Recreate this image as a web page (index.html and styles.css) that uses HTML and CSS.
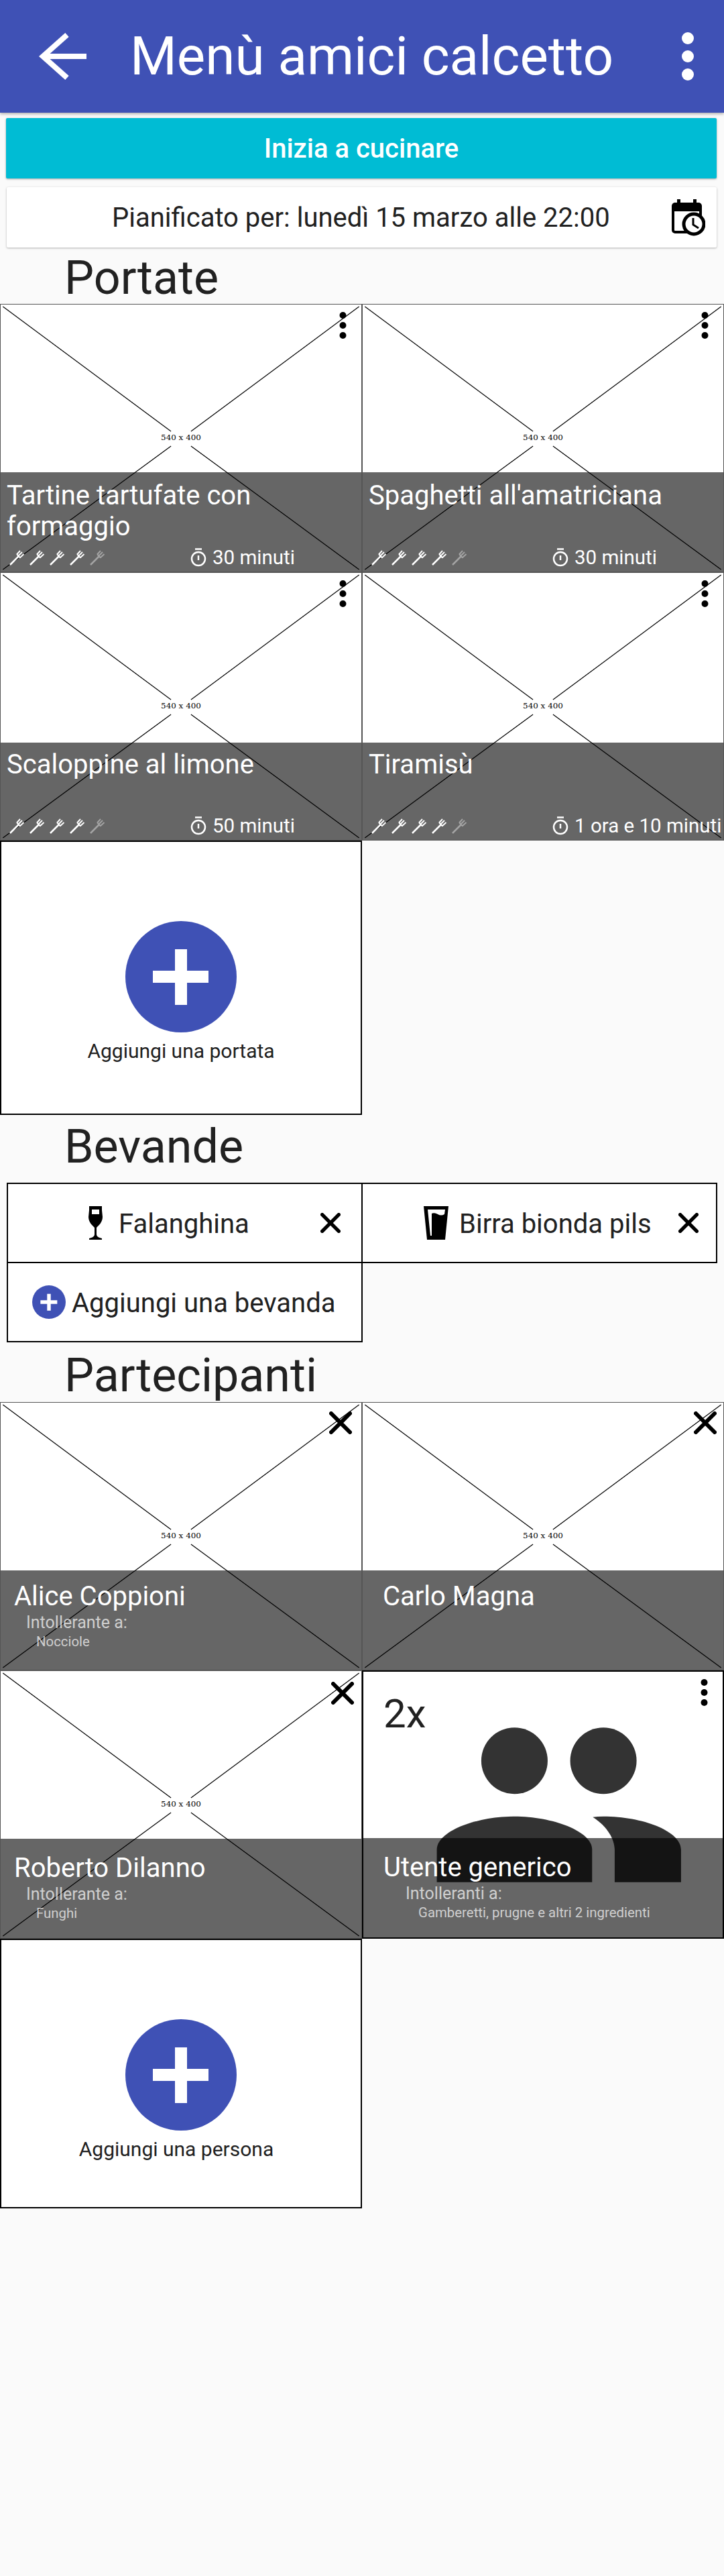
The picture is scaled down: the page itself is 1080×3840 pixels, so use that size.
FILE: index.html
```html
<!DOCTYPE html>
<html lang="it">
<head>
  <meta charset="UTF-8">
  <title>Menù amici calcetto</title>
  <meta name="viewport" content="width=device-width, initial-scale=1.0">
  <link rel="stylesheet" href="styles.css">
</head>
<body>

  <svg class="sprites" aria-hidden="true">
    <symbol id="dots" viewBox="0 0 18 72">
      <circle cx="9" cy="9" r="9"/>
      <circle cx="9" cy="36" r="9"/>
      <circle cx="9" cy="63" r="9"/>
    </symbol>
    <symbol id="close" viewBox="0 0 34 34">
      <path d="M3 3L31 31M31 3L3 31" fill="none" stroke="#000" stroke-width="6" stroke-linecap="round"/>
    </symbol>
    <symbol id="fork" viewBox="0 0 24 24">
      <path d="M1 23L14 10" fill="none" stroke="#fff" stroke-width="2.500"/>
      <path d="M11 7L16 12.500M11 7.500L16 2M13.500 9.500L19 4M15.500 12.500L21.500 7" fill="none" stroke="#fff" stroke-width="1.900"/>
    </symbol>
    <symbol id="timer" viewBox="0 0 24 28">
      <path d="M7 1.500H17M12 11V18" fill="none" stroke="currentColor" stroke-width="2.500"/>
      <circle cx="12" cy="16" r="10" fill="none" stroke="currentColor" stroke-width="2.500"/>
    </symbol>
    <symbol id="plus" viewBox="0 0 166 166">
      <circle cx="83" cy="83" r="83" fill="#3f51b5"/>
      <path d="M74 42H92V74H124V92H92V125H74V92H41V74H74Z" fill="#fff"/>
    </symbol>
    <symbol id="placeholder" viewBox="0 0 540 400">
      <path d="M3 3L255 190M285 212L537 397M537 3L285 190M255 212L3 397" fill="none" stroke="#000" stroke-width="1.200"/>
      <text x="270" y="203" class="placeholder-label">540 x 400</text>
    </symbol>
  </svg>

  <header class="toolbar">
    <svg class="toolbar-back" viewBox="0 0 72 70"><path d="M42 3L6 35L42 67M6 35H71" fill="none" stroke="#fff" stroke-width="8"/></svg>
    <h1 class="toolbar-title">Menù amici calcetto</h1>
    <svg class="toolbar-menu"><use href="#dots" fill="#fff"/></svg>
  </header>

  <main>
    <button class="start-btn" type="button">Inizia a cucinare</button>

    <div class="schedule">
      <span class="schedule-text">Pianificato per: lunedì 15 marzo alle 22:00</span>
      <svg class="schedule-icon" viewBox="0 0 50 55">
        <path d="M8 0H13V6H8ZM32 0H37V6H32Z"/>
        <rect x="2" y="7" width="41" height="42" rx="3" fill="none" stroke="#000" stroke-width="4"/>
        <rect x="2" y="7" width="41" height="11"/>
        <circle cx="33" cy="37" r="15" fill="#fff" stroke="#000" stroke-width="5"/>
        <path d="M32 28V38L40 43" fill="none" stroke="#000" stroke-width="3"/>
      </svg>
    </div>

    <h2 class="section-title section-title-dishes">Portate</h2>
    <section class="tile-grid">
      <article class="tile">
        <svg class="tile-img"><use href="#placeholder"/></svg>
        <svg class="tile-dots"><use href="#dots"/></svg>
        <div class="tile-info">
          <h3 class="tile-name">Tartine tartufate con formaggio</h3>
          <div class="dish-meta">
            <span class="forks">
              <svg class="fork"><use href="#fork"/></svg>
              <svg class="fork"><use href="#fork"/></svg>
              <svg class="fork"><use href="#fork"/></svg>
              <svg class="fork"><use href="#fork"/></svg>
              <svg class="fork fork-off"><use href="#fork"/></svg>
            </span>
            <svg class="timer"><use href="#timer"/></svg>
            <span class="dish-time">30 minuti</span>
          </div>
        </div>
      </article>

      <article class="tile">
        <svg class="tile-img"><use href="#placeholder"/></svg>
        <svg class="tile-dots"><use href="#dots"/></svg>
        <div class="tile-info">
          <h3 class="tile-name">Spaghetti all'amatriciana</h3>
          <div class="dish-meta">
            <span class="forks">
              <svg class="fork"><use href="#fork"/></svg>
              <svg class="fork"><use href="#fork"/></svg>
              <svg class="fork"><use href="#fork"/></svg>
              <svg class="fork"><use href="#fork"/></svg>
              <svg class="fork fork-off"><use href="#fork"/></svg>
            </span>
            <svg class="timer"><use href="#timer"/></svg>
            <span class="dish-time">30 minuti</span>
          </div>
        </div>
      </article>

      <article class="tile tile-short">
        <svg class="tile-img"><use href="#placeholder"/></svg>
        <svg class="tile-dots"><use href="#dots"/></svg>
        <div class="tile-info">
          <h3 class="tile-name">Scaloppine al limone</h3>
          <div class="dish-meta">
            <span class="forks">
              <svg class="fork"><use href="#fork"/></svg>
              <svg class="fork"><use href="#fork"/></svg>
              <svg class="fork"><use href="#fork"/></svg>
              <svg class="fork"><use href="#fork"/></svg>
              <svg class="fork fork-off"><use href="#fork"/></svg>
            </span>
            <svg class="timer"><use href="#timer"/></svg>
            <span class="dish-time">50 minuti</span>
          </div>
        </div>
      </article>

      <article class="tile tile-short">
        <svg class="tile-img"><use href="#placeholder"/></svg>
        <svg class="tile-dots"><use href="#dots"/></svg>
        <div class="tile-info">
          <h3 class="tile-name">Tiramisù</h3>
          <div class="dish-meta">
            <span class="forks">
              <svg class="fork"><use href="#fork"/></svg>
              <svg class="fork"><use href="#fork"/></svg>
              <svg class="fork"><use href="#fork"/></svg>
              <svg class="fork"><use href="#fork"/></svg>
              <svg class="fork fork-off"><use href="#fork"/></svg>
            </span>
            <svg class="timer"><use href="#timer"/></svg>
            <span class="dish-time">1 ora e 10 minuti</span>
          </div>
        </div>
      </article>

      <button class="add-tile add-tile-dish" type="button">
        <svg class="add-icon"><use href="#plus"/></svg>
        <span class="add-label">Aggiungi una portata</span>
      </button>
    </section>

    <h2 class="section-title section-title-drinks">Bevande</h2>
    <section class="drinks">
      <div class="drink drink-wine">
        <svg class="drink-icon wine-icon" viewBox="0 0 21 50">
          <path fill-rule="evenodd" d="M1 0H20L20 6L21 16C21 24 15 29 12 32L12 42C12 45 15 47 20 48V50H1V48C6 47 9 45 9 42V32C6 29 0 24 0 16L1 6ZM5 5V12H16V5Z"/>
        </svg>
        <span class="drink-name">Falanghina</span>
        <svg class="drink-close"><use href="#close"/></svg>
      </div>
      <div class="drink drink-beer">
        <svg class="drink-icon beer-icon" viewBox="0 0 37 50">
          <path d="M0 0H37L32 50H5Z"/>
          <path d="M6 5H32L31 12Q26 15 21 12Q16 9 12 11L12 44H10Z" fill="#fff"/>
        </svg>
        <span class="drink-name">Birra bionda pils</span>
        <svg class="drink-close"><use href="#close"/></svg>
      </div>
      <button class="drink drink-add" type="button">
        <svg class="drink-add-icon"><use href="#plus"/></svg>
        <span class="drink-name">Aggiungi una bevanda</span>
      </button>
    </section>

    <h2 class="section-title section-title-people">Partecipanti</h2>
    <section class="tile-grid">
      <article class="tile">
        <svg class="tile-img"><use href="#placeholder"/></svg>
        <svg class="tile-close"><use href="#close"/></svg>
        <div class="tile-info">
          <h3 class="person-name">Alice Coppioni</h3>
          <p class="person-label">Intollerante a:</p>
          <p class="person-items">Nocciole</p>
        </div>
      </article>

      <article class="tile tile-wide">
        <svg class="tile-img"><use href="#placeholder"/></svg>
        <svg class="tile-close"><use href="#close"/></svg>
        <div class="tile-info">
          <h3 class="person-name">Carlo Magna</h3>
        </div>
      </article>

      <article class="tile tile-low">
        <svg class="tile-img"><use href="#placeholder"/></svg>
        <svg class="tile-close tile-close-low"><use href="#close"/></svg>
        <div class="tile-info">
          <h3 class="person-name">Roberto Dilanno</h3>
          <p class="person-label">Intollerante a:</p>
          <p class="person-items">Funghi</p>
        </div>
      </article>

      <article class="tile tile-wide tile-low tile-generic">
        <svg class="tile-img" viewBox="0 0 540 400">
          <g fill="#333">
            <circle cx="227" cy="134" r="50"/>
            <circle cx="361" cy="134" r="50"/>
            <path d="M110 317V268C110 240 170 218 227 218S344 240 344 268V317Z"/>
            <path d="M345 219Q352 218 361 218C420 218 478 240 478 268V317H378V268C378 252 366 232 345 219Z"/>
          </g>
        </svg>
        <svg class="tile-dots"><use href="#dots"/></svg>
        <span class="generic-count">2x</span>
        <div class="tile-info">
          <h3 class="person-name">Utente generico</h3>
          <p class="person-label">Intolleranti a:</p>
          <p class="person-items">Gamberetti, prugne e altri 2 ingredienti</p>
        </div>
      </article>

      <button class="add-tile" type="button">
        <svg class="add-icon"><use href="#plus"/></svg>
        <span class="add-label add-label-left">Aggiungi una persona</span>
      </button>
    </section>
  </main>

</body>
</html>
```

FILE: styles.css
```css
body {
  font-family: Roboto, "Liberation Sans", sans-serif;
  margin: 0;
  min-height: 3840px;
  background-color: #fafafa;
  color: #212121;
}

h1, h2, h3, p {
  margin: 0;
  font-weight: 400;
}

button {
  font-family: inherit;
  color: inherit;
  padding: 0;
}

.sprites {
  display: none;
}

/* toolbar */
.toolbar {
  display: flex;
  align-items: center;
  height: 168px;
  padding: 0 44px 0 58px;
  background-color: #3f51b5;
  color: white;
  box-shadow: 0 2px 4px rgba(0,0,0,0.3);
}

.toolbar-back {
  width: 72px;
  height: 70px;
  flex: none;
}

.toolbar-title {
  flex: 1;
  margin-left: 64px;
  font-size: 80px;
  white-space: nowrap;
}

.toolbar-menu {
  width: 20px;
  height: 72px;
  flex: none;
}

/* top actions */
.start-btn {
  display: block;
  width: 1060px;
  height: 90px;
  margin: 8px 0 0 9px;
  border: none;
  border-radius: 2px;
  background-color: #00bcd4;
  color: white;
  font-size: 40px;
  font-weight: 500;
  box-shadow: 0 1px 3px rgba(0,0,0,0.35);
}

.schedule {
  display: flex;
  align-items: center;
  width: 1059px;
  height: 90px;
  margin: 13px 0 0 10px;
  background: white;
  border-radius: 2px;
  box-shadow: 0 1px 3px rgba(0,0,0,0.3);
}

.schedule-text {
  margin-left: 157px;
  font-size: 40px;
  white-space: nowrap;
}

.schedule-icon {
  width: 50px;
  height: 55px;
  margin-left: auto;
  margin-right: 17px;
}

/* section headings */
.section-title {
  height: 84px;
  padding: 5px 0 0 96px;
  font-size: 70px;
  line-height: 84px;
  box-sizing: border-box;
}

.section-title-dishes {
  padding-top: 3px;
}

.section-title-drinks {
  height: 101px;
}

.section-title-people {
  height: 90px;
  padding-top: 8px;
}

/* tiles */
.tile-grid {
  display: grid;
  grid-template-columns: 540px 540px;
  align-items: start;
}

.tile {
  position: relative;
  display: flex;
  flex-direction: column;
  justify-content: flex-end;
  height: 400px;
  background: white;
  border: 1px solid #555;
  box-sizing: border-box;
}

.tile-img {
  position: absolute;
  left: 0;
  top: 0;
  width: 100%;
  height: 100%;
}

.placeholder-label {
  font-family: "DejaVu Serif", serif;
  font-size: 12px;
  text-anchor: middle;
}

.tile-dots {
  position: absolute;
  top: 11px;
  right: 22px;
  width: 11px;
  height: 40px;
}

.tile-close {
  position: absolute;
  top: 13px;
  right: 14px;
  width: 34px;
  height: 34px;
}

.tile-wide .tile-close {
  right: 10px;
}

.tile-close-low {
  top: 16px;
  right: 11px;
}

.tile-info {
  position: relative;
  height: 148px;
  padding: 12px 0 0 10px;
  background-color: rgba(0,0,0,0.6);
  color: white;
  box-sizing: border-box;
}

.tile-short .tile-info {
  height: 145px;
  padding-top: 10px;
}

.tile-name {
  height: 97px;
  margin-left: -1px;
  font-size: 40px;
  line-height: 46px;
}

.tile-short .tile-name {
  height: 96px;
}

.dish-meta {
  display: flex;
  align-items: center;
  height: 35px;
}

.forks {
  display: flex;
  flex: none;
  width: 270px;
  margin-left: 3px;
  gap: 6px;
}

.fork {
  width: 24px;
  height: 24px;
}

.fork-off {
  opacity: 0.4;
}

.timer {
  width: 24px;
  height: 28px;
  flex: none;
  color: white;
}

.dish-time {
  margin-left: 9px;
  font-size: 29.5px;
  white-space: nowrap;
}

/* people */
.tile .person-name {
  margin-left: 10px;
  padding-top: 4px;
  font-size: 40px;
  line-height: 46px;
}

.tile-low .person-name {
  padding-top: 9px;
}

.person-label {
  margin: 0 0 0 28px;
  font-size: 25px;
  line-height: 32px;
  color: rgba(255,255,255,0.7);
}

.person-items {
  margin: -2px 0 0 43px;
  font-size: 20.4px;
  line-height: 28px;
  color: rgba(255,255,255,0.7);
}

.tile-wide .person-name {
  margin-left: 20px;
}

.tile-wide .person-label {
  margin-left: 53px;
}

.tile-wide .person-items {
  margin-left: 72px;
}

.tile-generic {
  border: 2px solid black;
}

.generic-count {
  position: absolute;
  left: 30px;
  top: 27px;
  font-size: 60px;
}

/* add buttons */
.add-tile {
  display: flex;
  flex-direction: column;
  align-items: center;
  height: 402px;
  padding-top: 118px;
  background: white;
  border: 2px solid black;
  box-sizing: border-box;
  color: #212121;
}

.add-tile-dish {
  height: 409px;
}

.add-icon {
  width: 166px;
  height: 166px;
  flex: none;
}

.add-label {
  margin-top: 10px;
  font-size: 30px;
}

.add-label-left {
  margin-right: 14px;
}

/* drinks */
.drinks {
  display: grid;
  grid-template-columns: 529px 529px;
  grid-auto-rows: 118px;
  padding: 1px 0 0 11px;
}

.drink {
  display: flex;
  align-items: center;
  margin: -1px;
  background: white;
  border: 2px solid black;
  font-size: 40px;
}

.drink-wine {
  padding-left: 120px;
}

.drink-beer {
  padding-left: 91px;
}

.drink-add {
  padding-left: 36px;
}

.drink-icon {
  height: 50px;
  flex: none;
  margin-right: 22px;
}

.wine-icon {
  width: 21px;
  margin-right: 24px;
}

.beer-icon {
  width: 37px;
  margin-right: 16px;
}

.drink-name {
  padding-top: 2px;
  white-space: nowrap;
}

.drink-close {
  width: 30px;
  height: 30px;
  margin-left: auto;
  margin-right: 31px;
}

.drink-beer .drink-close {
  margin-right: 26px;
}

.drink-add-icon {
  width: 50px;
  height: 50px;
  flex: none;
  margin-right: 9px;
}
```
